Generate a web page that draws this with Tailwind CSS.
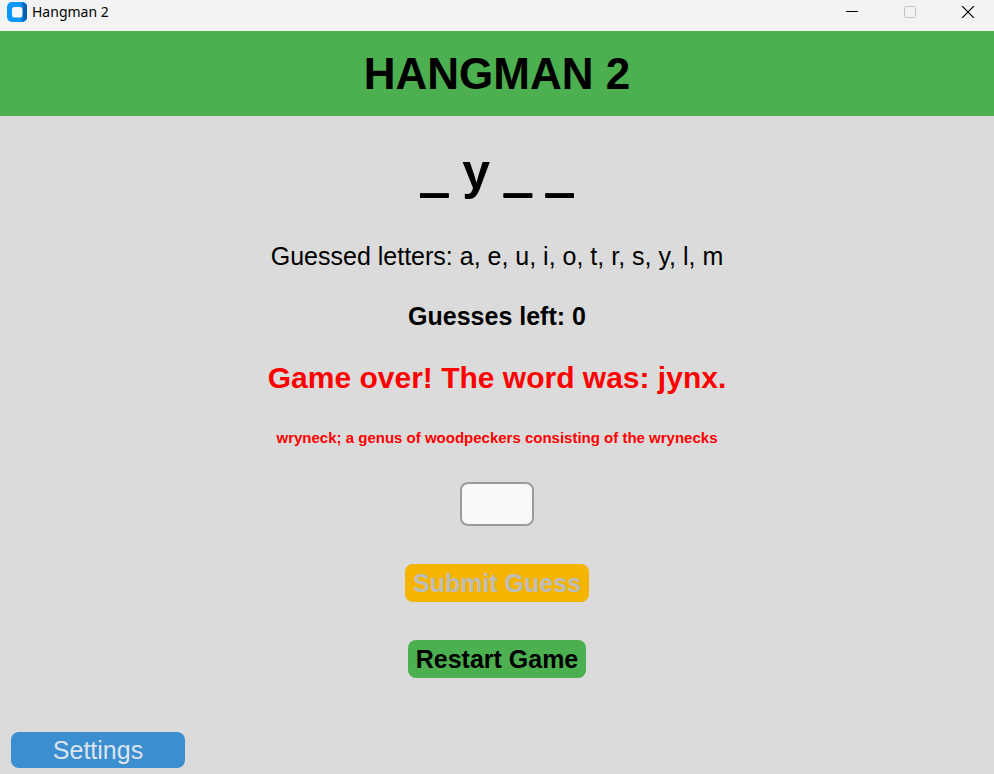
<!DOCTYPE html>
<html lang="en">
<head>
<meta charset="utf-8">
<meta name="viewport" content="width=device-width, initial-scale=1">
<title>Hangman 2</title>
<script src="https://cdn.jsdelivr.net/npm/@tailwindcss/browser@4"></script>
</head>
<body class="flex min-h-screen flex-col bg-[#dbdbdb] font-['Liberation_Sans',Arial,sans-serif] text-black">
  <!-- Window title bar -->
  <div class="flex h-[31px] items-start justify-between bg-[#f3f3f3]">
    <div class="flex items-center gap-[5px] pt-0.5 pl-[7px]">
      <svg class="size-5" viewBox="0 0 20 20" aria-hidden="true">
        <rect width="20" height="20" rx="5" fill="#0a97fb"/>
        <path d="M15 0a5 5 0 0 1 5 5v10a5 5 0 0 1-5 5l-1-4 1-2V6l-1-2z" fill="#0878d4"/>
        <path d="M16.500 1a4.500 4.500 0 0 1 3.500 4v10a4.500 4.500 0 0 1-3.500 4V15l-1-1V6l1-1z" fill="#0560b0"/>
        <rect x="5" y="5" width="10.500" height="10.500" rx="2.500" fill="#f7f7f7"/>
      </svg>
      <span class="font-['Noto_Sans',sans-serif] text-sm leading-5">Hangman 2</span>
    </div>
    <div class="flex gap-[46px] pr-5">
      <button type="button" aria-label="Minimize" class="grid h-6 w-3 place-items-center"><svg class="size-3" viewBox="0 0 12 12"><path d="M0 5.500h12" stroke="#000"/></svg></button>
      <button type="button" aria-label="Maximize" disabled class="grid h-6 w-3 place-items-center"><svg class="size-3" viewBox="0 0 12 12"><rect x=".5" y=".5" width="11" height="11" rx="1" fill="none" stroke="#c3c3c3"/></svg></button>
      <button type="button" aria-label="Close" class="grid h-6 w-3 place-items-center"><svg class="size-3" viewBox="0 0 12 12"><path d="M0 0l12 12M12 0L0 12" stroke="#000" stroke-width="1.200"/></svg></button>
    </div>
  </div>

  <header class="bg-[#4caf50] py-4 text-center">
    <h1 class="text-[44px] leading-[53px] font-bold">HANGMAN 2</h1>
  </header>

  <main class="flex flex-1 flex-col items-center px-3 pt-[26px] text-center">
    <!-- Blanks are thickened downwards with a hard shadow -->
    <p class="text-[50px] leading-[60px] font-bold"><span class="[text-shadow:0_1px_0_#000,0_2px_0_#000,0_3px_0_#000]">_</span> y <span class="[text-shadow:0_1px_0_#000,0_2px_0_#000,0_3px_0_#000]">_ _</span></p>
    <p class="mt-[39px] text-[25px] leading-[30px]">Guessed letters: a, e, u, i, o, t, r, s, y, l, m</p>
    <p class="mt-[30px] text-[25px] leading-[30px] font-bold">Guesses left: 0</p>
    <p class="mt-[29px] text-[30px] leading-9 font-bold text-[#ff0000]">Game over! The word was: jynx.</p>
    <p class="mt-8 text-[15px] leading-5 font-bold text-[#ff0000]">wryneck; a genus of woodpeckers consisting of the wrynecks</p>
    <form class="mt-[34px] flex flex-col items-center gap-[38px]">
      <input type="text" maxlength="1" aria-label="Guess a letter" class="h-11 w-[74px] rounded-lg border-2 border-[#979da2] bg-[#f9f9fa] text-center text-[25px]">
      <button type="submit" disabled class="h-[38px] rounded-lg bg-[#f4b400] px-2 text-[25px] leading-[30px] font-bold text-[#bdbdbd]">Submit Guess</button>
      <button type="button" class="h-[38px] rounded-lg bg-[#4caf50] px-2 text-[25px] leading-[30px] font-bold">Restart Game</button>
    </form>
  </main>

  <footer class="px-[11px] pb-1.5">
    <button type="button" class="h-9 w-[174px] rounded-lg bg-[#3b8ed0] text-[25px] leading-[30px] text-[#dce4ee]">Settings</button>
  </footer>
</body>
</html>
